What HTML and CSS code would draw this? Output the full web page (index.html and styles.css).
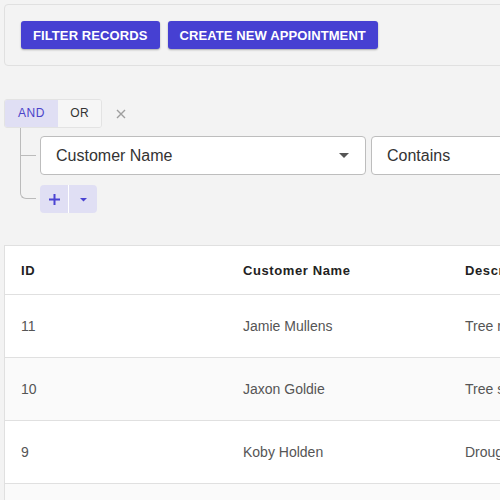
FILE: index.html
```html
<!DOCTYPE html>
<html lang="en">
  <head>
    <meta charset="UTF-8" />
    <meta name="viewport" content="width=device-width, initial-scale=1.0" />
    <title>Appointments</title>
    <link rel="stylesheet" href="styles.css">
  </head>
  <body>
    <div class="page">
      <div class="toolbar">
        <button class="btn">Filter Records</button>
        <button class="btn">Create New Appointment</button>
      </div>

      <div class="query">
        <div class="combinator">
          <div class="switch">
            <span class="opt active">AND</span>
            <span class="opt">OR</span>
          </div>
          <span class="remove">
            <svg width="10" height="10" viewBox="0 0 10 10">
              <path d="M1 1L9 9M9 1L1 9" stroke="#9e9e9e" stroke-width="1.4" />
            </svg>
          </span>
        </div>
        <div class="children">
          <div class="rule">
            <div class="field select">
              <span>Customer Name</span>
              <svg width="10" height="5" viewBox="0 0 10 5"><path d="M0 0H10L5 5Z" fill="#555" /></svg>
            </div>
            <div class="field operator">
              <span>Contains</span>
            </div>
          </div>
          <div class="actions">
            <span class="act">
              <svg width="11" height="11" viewBox="0 0 11 11">
                <path d="M5.5 0V11M0 5.5H11" stroke="#4a43d2" stroke-width="2" />
              </svg>
            </span>
            <span class="act">
              <svg width="7" height="5" viewBox="0 0 7 5"><path d="M0 1H7L3.5 4.5Z" fill="#4a43d2" /></svg>
            </span>
          </div>
        </div>
      </div>

      <div class="grid">
        <table>
          <tr class="head">
            <th>ID</th>
            <th>Customer Name</th>
            <th>Description</th>
          </tr>
          <tr>
            <td>11</td>
            <td>Jamie Mullens</td>
            <td>Tree removal</td>
          </tr>
          <tr class="alt">
            <td>10</td>
            <td>Jaxon Goldie</td>
            <td>Tree stump grinding</td>
          </tr>
          <tr>
            <td>9</td>
            <td>Koby Holden</td>
            <td>Drought watering</td>
          </tr>
          <tr class="alt">
            <td>8</td>
            <td>Mia Carter</td>
            <td>Hedge trimming</td>
          </tr>
        </table>
      </div>
    </div>
  </body>
</html>
```

FILE: styles.css
```css
body {
  margin: 0;
  padding: 4px;
  background-color: #f3f3f3;
  font-family: "Liberation Sans", Arial, sans-serif;
  overflow: hidden;
}
.page {
  width: 1100px;
}
.toolbar {
  display: flex;
  gap: 8px;
  padding: 16px;
  border: 1px solid #e0e0e0;
  border-radius: 4px;
}
.btn {
  height: 28px;
  padding: 0 12px;
  border: none;
  border-radius: 3px;
  background-color: #4640d2;
  color: white;
  font-family: "Liberation Sans", Arial, sans-serif;
  font-weight: 700;
  font-size: 13px;
  letter-spacing: 0.1px;
  text-transform: uppercase;
  box-shadow: 0 1px 2px rgba(0, 0, 0, 0.3);
}
.query {
  margin-top: 33px;
}
.combinator {
  display: flex;
  align-items: center;
  gap: 14px;
}
.switch {
  display: flex;
  border: 1px solid #e3e3e3;
  border-radius: 3px;
  overflow: hidden;
}
.opt {
  height: 27px;
  line-height: 27px;
  padding: 0 12px;
  background-color: #f6f6f6;
  color: #333;
  font-size: 12px;
  letter-spacing: 0.6px;
}
.opt.active {
  padding: 0 13px;
  background-color: #e0dff4;
  color: #4a43c9;
}
.remove {
  display: flex;
}
.children {
  margin-left: 16px;
  padding-left: 20px;
  padding-top: 8px;
}
.rule,
.actions {
  position: relative;
}
.rule::before,
.actions::before {
  content: "";
  position: absolute;
  left: -20px;
  width: 15px;
  border-left: 1px solid #bbb;
  border-bottom: 1px solid #bbb;
}
.rule::before {
  top: -8px;
  height: 27px;
}
.actions::before {
  top: -30px;
  height: 43px;
  border-bottom-left-radius: 6px;
}
.rule {
  display: flex;
  gap: 5px;
}
.field {
  display: flex;
  align-items: center;
  justify-content: space-between;
  height: 37px;
  padding: 0 16px 0 15px;
  background-color: white;
  border: 1px solid #bdbdbd;
  border-radius: 4px;
  color: #333;
  font-size: 16px;
}
.select {
  width: 293px;
}
.operator {
  width: 400px;
}
.actions {
  display: flex;
  margin-top: 10px;
  width: max-content;
}
.act {
  display: flex;
  align-items: center;
  justify-content: center;
  height: 28px;
  background-color: #e0dff4;
}
.act:first-child {
  width: 28px;
  border-radius: 4px 0 0 4px;
  border-right: 1px solid white;
}
.act:last-child {
  width: 28px;
  border-radius: 0 4px 4px 0;
}
.grid {
  margin-top: 32px;
  background-color: white;
  border: 1px solid #e0e0e0;
}
table {
  border-collapse: collapse;
}
th,
td {
  width: 206px;
  padding: 0 0 0 16px;
  text-align: left;
  border-bottom: 1px solid #e0e0e0;
}
th {
  height: 48px;
  color: #222;
  font-size: 13px;
  font-weight: 700;
  letter-spacing: 0.6px;
}
td {
  height: 62px;
  color: #555;
  font-size: 14px;
}
.alt td {
  background-color: #fafafa;
}
```
